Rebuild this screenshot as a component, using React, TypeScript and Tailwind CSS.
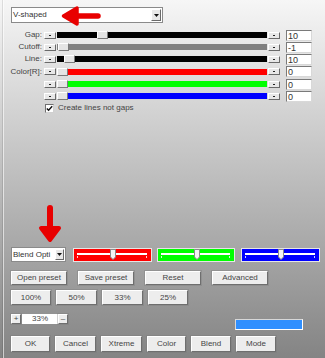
import React from "react";

const font = "font-['Liberation_Sans',Arial,sans-serif]";

function SmallBtn() {
  return (
    <div className="w-[12px] h-[7px] bg-[#e8e8e8] border border-t-white border-l-white border-b-[#6a6a6a] border-r-[#6a6a6a] flex items-center justify-center shrink-0">
      <div className="w-[2px] h-[1px] bg-[#222]" />
    </div>
  );
}

function SliderRow({
  label,
  color,
  thumb,
  value,
  h,
}: {
  label: string;
  color: string;
  thumb: number;
  value: string;
  h: string;
}) {
  return (
    <div className={`flex items-center ${h}`}>
      <div className="w-[44px] pr-[2px] text-right text-[8px] leading-none text-[#444]">{label}</div>
      <SmallBtn />
      <div className="relative ml-[1px] w-[210px] h-[6px]" style={{ background: color }}>
        <div
          className="absolute top-[-1px] w-[11px] h-[8px] bg-[#e4e4e4] border border-t-white border-l-white border-b-[#7a7a7a] border-r-[#7a7a7a]"
          style={{ left: thumb }}
        />
      </div>
      <div className="ml-[1px]">
        <SmallBtn />
      </div>
      <div className="ml-[6px] w-[26px] h-[11px] bg-white border border-t-[#7a7a7a] border-l-[#7a7a7a] border-b-[#d8d8d8] border-r-[#d8d8d8] text-[9px] leading-[10px] pl-[1px] text-[#333]">
        {value}
      </div>
    </div>
  );
}

function Btn({ children, w }: { children: React.ReactNode; w: string }) {
  return (
    <div
      className={`${w} h-full bg-[#ededed] border border-t-white border-l-white border-b-[#6e6e6e] border-r-[#6e6e6e] shadow-[0_0_0_1px_rgba(120,120,120,0.35)] flex items-center justify-center text-[8px] text-[#444] leading-none shrink-0`}
    >
      {children}
    </div>
  );
}

function ColorSlider({ color, w }: { color: string; w: string }) {
  return (
    <div className={`${w} h-[14px] mt-[1px] border border-[#e6e6e6] relative`} style={{ background: color }}>
      <div className="absolute left-[3px] right-[4px] top-[4px] h-[2px] bg-white" />
      <div className="absolute left-[3px] top-[7px] w-[1px] h-[2px] bg-white/80" />
      <div className="absolute right-[4px] top-[7px] w-[1px] h-[2px] bg-white/80" />
      <svg className="absolute left-[36px] top-[0px]" width="6" height="11" viewBox="0 0 6 11">
        <path d="M0.5 0.5 H5.5 V8 L3 10.5 L0.5 8 Z" fill="#f4f4f4" stroke="#8a8a8a" strokeWidth="1" />
      </svg>
    </div>
  );
}

export default function App() {
  return (
    <div
      className={`relative w-[325px] h-[358px] overflow-hidden ${font} bg-[linear-gradient(to_bottom,#f6f6f6,#848484)]`}
    >
      <div className="absolute left-[3px] top-0 bottom-0 w-[1px] bg-white/60" />
      <div className="absolute left-[2px] top-0 bottom-0 w-[1px] bg-black/10" />

      <div className="flex flex-col pt-[7px]">
        {/* top dropdown */}
        <div className="ml-[11px] w-[152px] h-[16px] bg-white border border-[#8a8a8a] flex items-center">
          <div className="flex-1 pl-[1px] text-[8px] leading-none text-[#333]">V-shaped</div>
          <div className="w-[10px] h-[12px] mr-[1px] bg-[#e8e8e8] border border-t-white border-l-white border-b-[#6a6a6a] border-r-[#6a6a6a] flex items-center justify-center">
            <svg width="5" height="3" viewBox="0 0 5 3">
              <path d="M0 0 H5 L2.5 3 Z" fill="#111" />
            </svg>
          </div>
        </div>

        {/* sliders */}
        <div className="mt-[6px] flex flex-col">
          <SliderRow label="Gap:" color="#000000" thumb={40} value="10" h="h-[12px]" />
          <SliderRow label="Cutoff:" color="#808080" thumb={1} value="-1" h="h-[12px]" />
          <SliderRow label="Line:" color="#000000" thumb={7} value="10" h="h-[12px]" />
          <SliderRow label="Color[R]:" color="#ff0000" thumb={0} value="0" h="h-[13px]" />
          <SliderRow label="" color="#00ff00" thumb={0} value="0" h="h-[12px]" />
          <SliderRow label="" color="#0000ff" thumb={0} value="0" h="h-[12px]" />
        </div>

        {/* checkbox */}
        <div className="mt-[1px] h-[10px] flex items-center pl-[45px]">
          <div className="w-[9px] h-[9px] bg-white border border-t-[#707070] border-l-[#707070] border-b-[#d0d0d0] border-r-[#d0d0d0] flex items-center justify-center">
            <svg width="7" height="7" viewBox="0 0 7 7">
              <path d="M0.8 3.4 L2.6 5.3 L6.2 1.2" fill="none" stroke="#111" strokeWidth="1.4" />
            </svg>
          </div>
          <div className="ml-[4px] text-[8px] leading-none text-[#444]">Create lines not gaps</div>
        </div>

        {/* blend row */}
        <div className="mt-[134px] h-[15px] flex items-start pl-[11px]">
          <div className="w-[55px] h-[15px] bg-white border border-[#8a8a8a] flex items-center overflow-hidden">
            <div className="flex-1 pl-[1px] text-[8px] leading-none text-[#333] whitespace-nowrap">Blend Opti</div>
            <div className="w-[9px] h-[11px] mr-[1px] bg-[#e8e8e8] border border-t-white border-l-white border-b-[#6a6a6a] border-r-[#6a6a6a] flex items-center justify-center shrink-0">
              <svg width="5" height="3" viewBox="0 0 5 3">
                <path d="M0 0 H5 L2.5 3 Z" fill="#111" />
              </svg>
            </div>
          </div>
          <div className="ml-[7px]">
            <ColorSlider color="#ff0000" w="w-[79px]" />
          </div>
          <div className="ml-[5px]">
            <ColorSlider color="#00ff00" w="w-[78px]" />
          </div>
          <div className="ml-[6px]">
            <ColorSlider color="#0000ff" w="w-[79px]" />
          </div>
        </div>

        {/* row 1 */}
        <div className="mt-[9px] h-[14px] flex pl-[11px] gap-[11px]">
          <Btn w="w-[56px]">Open preset</Btn>
          <Btn w="w-[56px]">Save preset</Btn>
          <Btn w="w-[56px]">Reset</Btn>
          <Btn w="w-[56px]">Advanced</Btn>
        </div>

        {/* row 2 */}
        <div className="mt-[5px] h-[15px] flex pl-[11px] gap-[5px]">
          <Btn w="w-[40px]">100%</Btn>
          <Btn w="w-[41px]">50%</Btn>
          <Btn w="w-[41px]">33%</Btn>
          <Btn w="w-[40px]">25%</Btn>
        </div>

        {/* row 3 */}
        <div className="mt-[9px] flex items-start pl-[11px]">
          <div className="h-[10px] flex">
            <Btn w="w-[10px]">+</Btn>
            <div className="w-[36px] h-full bg-white ml-[1px] text-[8px] leading-[10px] text-[#444] text-center">33%</div>
            <Btn w="w-[10px]">–</Btn>
          </div>
          <div className="ml-[167px] mt-[5px] w-[68px] h-[11px] bg-[#2f8fff] border border-t-[#d8d8d8] border-l-[#d8d8d8] border-b-white border-r-white" />
        </div>

        {/* row 4 */}
        <div className="mt-[6px] h-[16px] flex pl-[11px] gap-[5px]">
          <Btn w="w-[39px]">OK</Btn>
          <Btn w="w-[41px]">Cancel</Btn>
          <Btn w="w-[41px]">Xtreme</Btn>
          <Btn w="w-[39px]">Color</Btn>
          <Btn w="w-[40px]">Blend</Btn>
          <Btn w="w-[40px]">Mode</Btn>
        </div>
      </div>

      {/* red arrows */}
      <svg className="absolute left-[60px] top-[4px]" width="42" height="24" viewBox="0 0 42 24">
        <path d="M38 12 H14" stroke="#e80000" strokeWidth="5.5" strokeLinecap="round" />
        <path d="M3.5 12 L17 4 L17 20 Z" fill="#e80000" stroke="#e80000" strokeWidth="3.5" strokeLinejoin="round" />
      </svg>
      <svg className="absolute left-[37px] top-[204px]" width="26" height="40" viewBox="0 0 26 40">
        <path d="M13 4 V26" stroke="#e80000" strokeWidth="6" strokeLinecap="round" />
        <path d="M4 24 L22 24 L13 36 Z" fill="#e80000" stroke="#e80000" strokeWidth="4" strokeLinejoin="round" />
      </svg>
    </div>
  );
}
